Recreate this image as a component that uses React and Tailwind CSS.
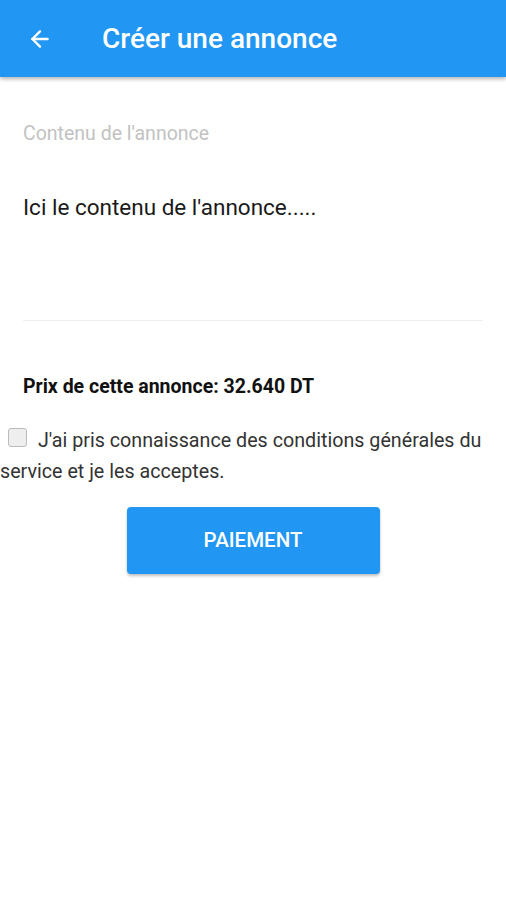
import { ArrowLeft } from "lucide-react";

export default function App() {
  return (
    <div className="min-h-[900px] bg-white font-['Roboto',sans-serif]">
      <header className="h-[77px] bg-[#2196f3] flex items-center shadow-[0_2px_4px_rgba(0,0,0,0.3)] relative">
        <ArrowLeft className="ml-[27px] w-[26px] h-[26px] text-white" strokeWidth={2.2} />
        <h1 className="ml-[49px] text-[28px] font-medium text-white leading-none">
          Créer une annonce
        </h1>
      </header>

      <div className="px-[23px] pt-[45px]">
        <label className="block text-[19.5px] leading-[24px] text-[#c2c2c2]">Contenu de l'annonce</label>
        <div className="pt-[48px] h-[175px] border-b border-[#eeeeee] text-[22.5px] leading-[26px] text-[#1a1a1a]">
          Ici le contenu de l'annonce.....
        </div>
        <p className="mt-[54px] text-[19.5px] leading-[24px] font-bold text-[#111]">
          Prix de cette annonce: 32.640 DT
        </p>
      </div>

      <p className="mt-[26px] pr-[16px] text-[19.7px] leading-[31px] text-[#333]">
        <input
          type="checkbox"
          className="ml-[8px] mr-[11px] w-[19px] h-[19px] align-[0px] rounded-[3px] border border-[#bbb] bg-[#eee] appearance-none"
        />
        J'ai pris connaissance des conditions générales du service et je les acceptes.
      </p>

      <div className="flex justify-center mt-[20px]">
        <button className="w-[253px] h-[67px] rounded-[4px] bg-[#2196f3] text-white text-[20.5px] font-medium shadow-[0_2px_3px_rgba(0,0,0,0.25)]">
          PAIEMENT
        </button>
      </div>
    </div>
  );
}
